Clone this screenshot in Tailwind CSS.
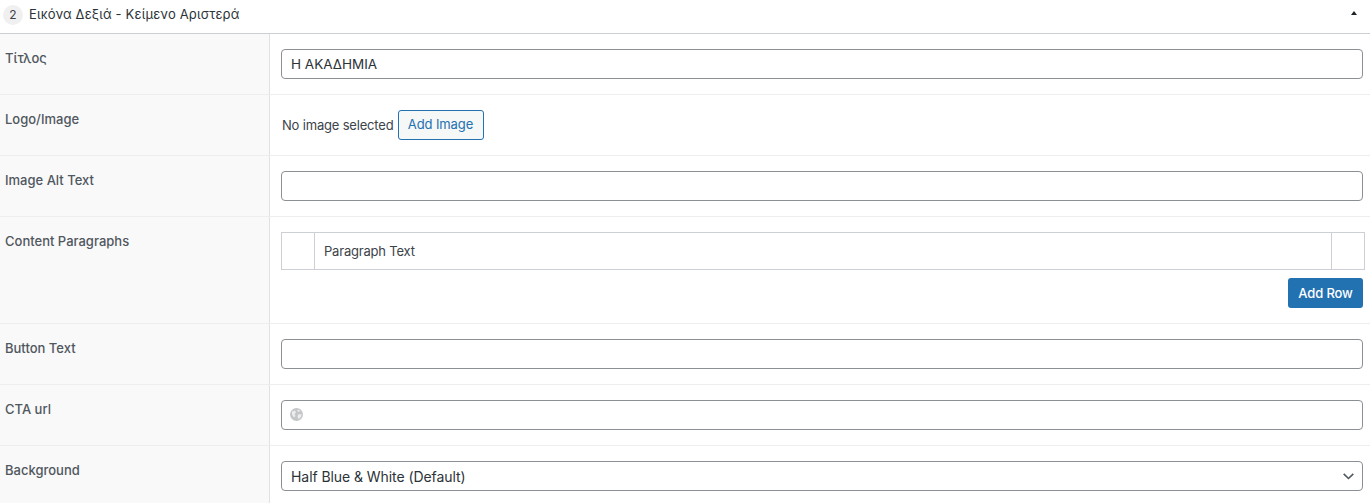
<!DOCTYPE html>
<html>
  <head>
    <meta charset="UTF-8" />
    <title>Flexible content</title>
    <script src="https://cdn.jsdelivr.net/npm/@tailwindcss/browser@4"></script>
  </head>
  <body class="bg-white font-['Inter',sans-serif] text-[13px] text-[#3c434a] overflow-hidden">
    <header class="h-[34px] flex items-center border-b border-[#ccd0d4] pl-[3px] pr-[12px]">
      <span class="w-[20px] h-[20px] rounded-full bg-[#f0f0f1] flex items-center justify-center text-[12px] mb-[4px]">2</span>
      <span class="ml-[6px] mb-[4px] tracking-[0.17px] text-[#2c3338]">Εικόνα Δεξιά - Κείμενο Αριστερά</span>
      <svg class="ml-auto mb-[7px] mr-[1px]" width="6" height="4" viewBox="0 0 6 4"><path d="M3 0 6 4H0Z" fill="#1d2327" /></svg>
    </header>

    <section class="flex h-[61px] border-b border-[#eeeeee]">
      <div class="w-[270px] shrink-0 bg-[#f9f9f9] border-r border-[#e1e1e1] pl-[5px] pt-[15px] font-[450] tracking-[0.1px] text-[#50575e]">Τίτλος</div>
      <div class="flex-1 pl-[11px] pr-[7px] pt-[15px]">
        <input type="text" value="Η ΑΚΑΔΗΜΙΑ" class="w-full h-[30px] border border-[#8c8f94] rounded-[4px] pl-[9px] pr-[8px] text-[13.5px] text-[#2c3338]" />
      </div>
    </section>

    <section class="flex h-[61px] border-b border-[#eeeeee]">
      <div class="w-[270px] shrink-0 bg-[#f9f9f9] border-r border-[#e1e1e1] pl-[5px] pt-[15px] font-[450] text-[#50575e]">Logo/Image</div>
      <div class="flex-1 pl-[12px] pr-[7px] pt-[15px] flex items-start gap-[4px]">
        <span class="leading-[30px] tracking-[-0.18px]">No image selected</span>
        <button class="h-[30px] w-[86px] border border-[#2271b1] rounded-[3px] bg-[#f6f7f7] text-[#2271b1] tracking-[-0.1px]">Add Image</button>
      </div>
    </section>

    <section class="flex h-[61px] border-b border-[#eeeeee]">
      <div class="w-[270px] shrink-0 bg-[#f9f9f9] border-r border-[#e1e1e1] pl-[5px] pt-[15px] font-[450] text-[#50575e]">Image Alt Text</div>
      <div class="flex-1 pl-[11px] pr-[7px] pt-[15px]">
        <input type="text" class="w-full h-[30px] border border-[#8c8f94] rounded-[4px] px-[8px]" />
      </div>
    </section>

    <section class="flex h-[107px] border-b border-[#eeeeee]">
      <div class="w-[270px] shrink-0 bg-[#f9f9f9] border-r border-[#e1e1e1] pl-[5px] pt-[15px] font-[450] text-[#50575e]">Content Paragraphs</div>
      <div class="flex-1 pl-[11px] pr-[5px] pt-[15px]">
        <div class="flex h-[38px] border border-[#ccd0d4]">
          <div class="w-[33px] border-r border-[#ccd0d4]"></div>
          <div class="flex-1 pl-[9px] leading-[36px] tracking-[-0.2px]">Paragraph Text</div>
          <div class="w-[33px] border-l border-[#ccd0d4]"></div>
        </div>
        <div class="flex justify-end mt-[8px] pr-[2px]">
          <button class="h-[30px] w-[75px] pt-[1px] rounded-[3px] bg-[#2271b1] text-white font-[450] tracking-[-0.1px]">Add Row</button>
        </div>
      </div>
    </section>

    <section class="flex h-[61px] border-b border-[#eeeeee]">
      <div class="w-[270px] shrink-0 bg-[#f9f9f9] border-r border-[#e1e1e1] pl-[5px] pt-[15px] font-[450] text-[#50575e]">Button Text</div>
      <div class="flex-1 pl-[11px] pr-[7px] pt-[15px]">
        <input type="text" class="w-full h-[30px] border border-[#8c8f94] rounded-[4px] px-[8px]" />
      </div>
    </section>

    <section class="flex h-[61px] border-b border-[#eeeeee]">
      <div class="w-[270px] shrink-0 bg-[#f9f9f9] border-r border-[#e1e1e1] pl-[5px] pt-[15px] font-[450] text-[#50575e]">CTA url</div>
      <div class="flex-1 pl-[11px] pr-[7px] pt-[15px]">
        <div class="relative h-[30px]">
          <svg class="absolute left-[9px] top-[8px]" width="13" height="13" viewBox="0 0 13 13">
            <circle cx="6.5" cy="6.5" r="6.5" fill="#c4c6c8" />
            <path d="M2 3.5 5 2.5 6 4.5 4.5 6 5.5 8 4 9.5 2 6.5ZM7.5 1.5 10 2.5 9 4 7.5 3.5ZM8 6.5 11.5 6 11 9 8.5 11 7.5 9Z" fill="#eceded" />
          </svg>
          <input type="text" class="w-full h-[30px] border border-[#8c8f94] rounded-[4px] pl-[28px] pr-[8px]" />
        </div>
      </div>
    </section>

    <section class="flex h-[58px]">
      <div class="w-[270px] shrink-0 bg-[#f9f9f9] border-r border-[#e1e1e1] pl-[5px] pt-[15px] font-[450] text-[#50575e]">Background</div>
      <div class="flex-1 pl-[11px] pr-[7px] pt-[15px]">
        <div class="relative h-[30px]">
          <select class="appearance-none w-full h-[30px] border border-[#8c8f94] rounded-[4px] pl-[9px] pr-[24px] pt-[1px] text-[14px] tracking-[-0.07px] text-[#2c3338] bg-white">
            <option>Half Blue &amp; White (Default)</option>
          </select>
          <svg class="absolute right-[9px] top-[12px] pointer-events-none" width="11" height="7" viewBox="0 0 11 7"><path d="M.7.9 5.5 5.5 10.3.9" fill="none" stroke="#50575e" stroke-width="1.6" /></svg>
        </div>
      </div>
    </section>
  </body>
</html>
